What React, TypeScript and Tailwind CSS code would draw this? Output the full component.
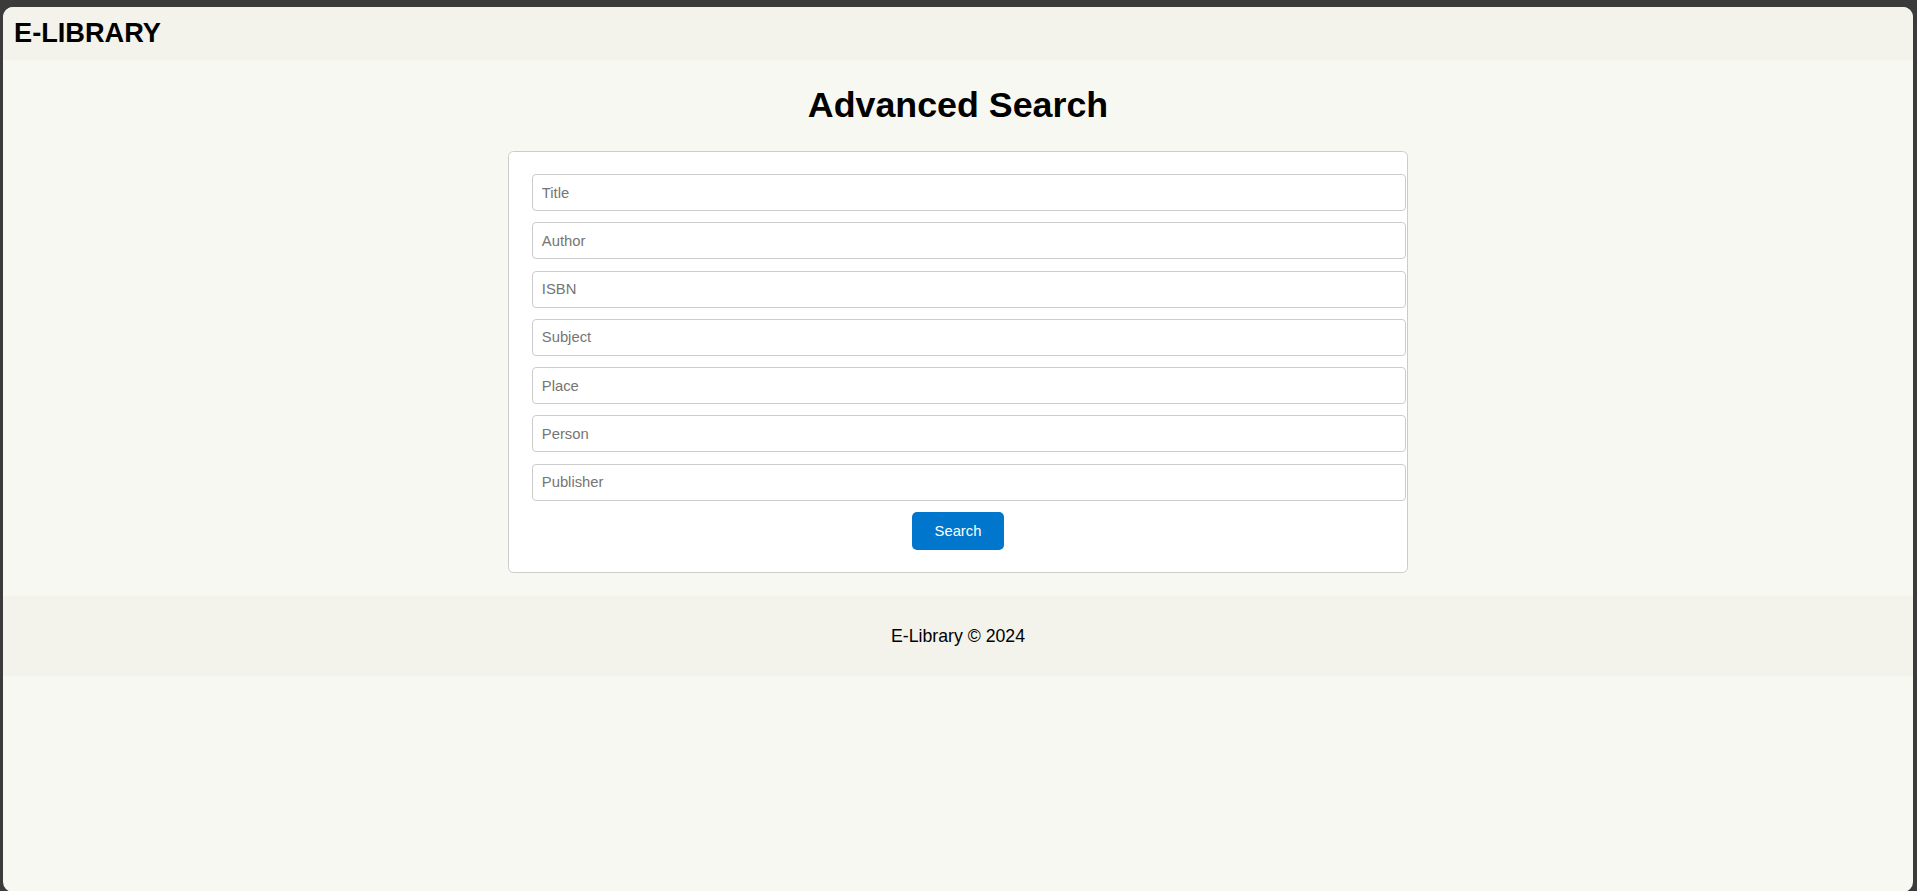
import React from "react";

const fields = ["Title", "Author", "ISBN", "Subject", "Place", "Person", "Publisher"];

export default function App() {
  return (
    <div
      className="w-full h-[891px] overflow-hidden bg-[#3b3b3b] pt-[7px] pl-[3px] pr-[4px]"
      style={{ fontFamily: '"Liberation Sans", Arial, sans-serif' }}
    >
      <div className="h-[885px] rounded-[10px] overflow-hidden bg-[#f8f8f3] text-black">
        <header className="h-[53px] bg-[#f3f2eb] pl-[11px] pt-[10.5px]">
          <div className="text-[27.2px] font-bold leading-[30px]">E-LIBRARY</div>
        </header>
        <main className="flex flex-col items-center">
          <h1 className="mt-[25.5px] mb-[26px] text-[35.8px] font-bold leading-[39.5px]">Advanced Search</h1>
          <div className="w-[900px] bg-white border border-[#cccccc] rounded-[5.5px] py-[22px] pr-[22px] pl-[23px]">
            <div className="flex flex-col gap-[11.3px]">
              {fields.map((f) => (
                <input
                  key={f}
                  type="text"
                  placeholder={f}
                  className="w-[873.6px] h-[37px] shrink-0 border border-[#cccccc] rounded-[4px] bg-white px-[8.8px] text-[14.8px] placeholder:text-[#757575] outline-none"
                  style={{ fontFamily: '"Liberation Sans", Arial, sans-serif' }}
                />
              ))}
            </div>
            <div className="flex justify-center mt-[11px] -ml-[1px]">
              <button
                className="w-[91.4px] h-[38.4px] rounded-[5px] bg-[#0077cc] text-white text-[14.8px]"
                style={{ fontFamily: '"Liberation Sans", Arial, sans-serif' }}
              >
                Search
              </button>
            </div>
          </div>
        </main>
        <footer className="mt-[23px] h-[80px] bg-[#f3f2eb] flex items-center justify-center">
          <span className="text-[17.7px] leading-[20px]">E-Library © 2024</span>
        </footer>
      </div>
    </div>
  );
}
